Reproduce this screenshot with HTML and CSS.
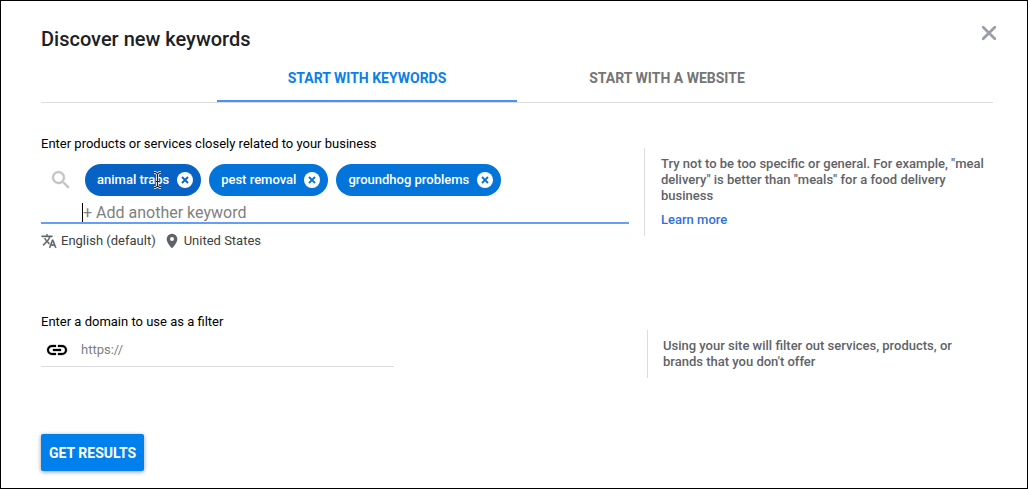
FILE: index.html
```html
<!DOCTYPE html>
<html lang="en">
<head>
<meta charset="utf-8">
<meta name="viewport" content="width=device-width, initial-scale=1">
<title>Discover new keywords</title>
<link rel="stylesheet" href="styles.css">
</head>
<body>
<main class="dialog">
  <header class="header">
    <h1 class="title">Discover new keywords</h1>
    <button class="close" type="button" aria-label="Close">
      <svg width="16" height="16" viewBox="0 0 16 16"><path d="M2.2 2.2l11.6 11.6M13.8 2.2L2.2 13.8" stroke="#9aa0a6" stroke-width="2.8" stroke-linecap="round"/></svg>
    </button>
  </header>

  <div class="tabs" role="tablist">
    <button class="tab tab-active" type="button" role="tab" aria-selected="true">START WITH KEYWORDS</button>
    <button class="tab" type="button" role="tab" aria-selected="false">START WITH A WEBSITE</button>
  </div>

  <form class="form">
    <section class="row">
      <div class="field">
        <label class="label" for="keywords">Enter products or services closely related to your business</label>
        <div class="keyword-box">
          <svg class="search" width="24" height="24" viewBox="0 0 24 24"><path fill="#c4c4c4" stroke="#c4c4c4" stroke-width=".4" d="M15.5 14h-.79l-.28-.27A6.47 6.47 0 0 0 16 9.500 6.500 6.500 0 1 0 9.500 16c1.610 0 3.090-.59 4.230-1.570l.27.28v.79l5 4.990L20.490 19l-4.990-5zm-6 0C7.010 14 5 11.990 5 9.500S7.010 5 9.500 5 14 7.010 14 9.500 11.990 14 9.500 14z"/></svg>
          <div class="chips">
            <span class="chip chip-hover">animal traps
              <button class="remove" type="button" aria-label="Remove animal traps"><svg width="16" height="16" viewBox="0 0 16 16"><circle cx="8" cy="8" r="8" fill="#fff"/><path d="M5 5l6 6M11 5l-6 6" stroke="#0662c4" stroke-width="1.800"/></svg></button>
              <svg class="pointer" width="9" height="18" viewBox="0 0 9 18"><path d="M1 1.500h1.500l2 1.500 2-1.500H8M4.500 3v12M1 16.500h1.500l2-1.500 2 1.500H8M3 10.500h3" fill="none" stroke="#fff" stroke-width="2.600"/><path d="M1 1.500h1.500l2 1.500 2-1.500H8M4.500 3v12M1 16.500h1.500l2-1.500 2 1.500H8M3 10.500h3" fill="none" stroke="#222" stroke-width="1.200"/></svg>
            </span>
            <span class="chip">pest removal
              <button class="remove" type="button" aria-label="Remove pest removal"><svg width="16" height="16" viewBox="0 0 16 16"><circle cx="8" cy="8" r="8" fill="#fff"/><path d="M5 5l6 6M11 5l-6 6" stroke="#0274da" stroke-width="1.800"/></svg></button>
            </span>
            <span class="chip">groundhog problems
              <button class="remove" type="button" aria-label="Remove groundhog problems"><svg width="16" height="16" viewBox="0 0 16 16"><circle cx="8" cy="8" r="8" fill="#fff"/><path d="M5 5l6 6M11 5l-6 6" stroke="#0274da" stroke-width="1.800"/></svg></button>
            </span>
          </div>
          <input class="keyword-input" id="keywords" type="text" placeholder="+ Add another keyword">
        </div>
        <div class="targeting">
          <button class="target" type="button"><svg width="16" height="16" viewBox="0 0 24 24"><path fill="#5f6368" stroke="#5f6368" stroke-width=".5" d="M12.870 15.070l-2.540-2.510.03-.03A17.520 17.520 0 0 0 14.070 6H17V4h-7V2H8v2H1v2h11.170C11.500 7.920 10.440 9.750 9 11.350 8.070 10.320 7.300 9.190 6.690 8h-2c.73 1.630 1.730 3.170 2.980 4.560l-5.090 5.020L4 19l5-5 3.110 3.110.76-2.040zM18.500 10h-2L12 22h2l1.120-3h4.750L21 22h2l-4.500-12zm-2.620 7l1.620-4.330L19.120 17h-3.240z"/></svg>English (default)</button>
          <button class="target" type="button"><svg width="16" height="16" viewBox="0 0 24 24"><path fill="#5f6368" d="M12 1a8 8 0 0 0-8 8c0 6 8 14 8 14s8-8 8-14a8 8 0 0 0-8-8zm0 11a3 3 0 1 1 0-6 3 3 0 0 1 0 6z"/></svg>United States</button>
        </div>
      </div>
      <aside class="tip">
        <p class="tip-text">Try not to be too specific or general. For example, "meal delivery" is better than "meals" for a food delivery business</p>
        <a class="learn" href="#">Learn more</a>
      </aside>
    </section>

    <section class="row">
      <div class="field">
        <label class="label" for="domain">Enter a domain to use as a filter</label>
        <div class="domain-box">
          <svg width="24" height="24" viewBox="0 0 24 24"><path fill="#000" stroke="#000" stroke-width=".3" d="M3.900 12c0-1.710 1.390-3.100 3.100-3.100h4V7H7a5 5 0 0 0 0 10h4v-1.900H7c-1.710 0-3.100-1.390-3.100-3.100zM8 13h8v-2H8v2zm9-6h-4v1.900h4a3.100 3.100 0 0 1 0 6.200h-4V17h4a5 5 0 0 0 0-10z"/></svg>
          <input class="domain-input" id="domain" type="text" placeholder="https://">
        </div>
      </div>
      <aside class="tip tip-short">
        <p class="tip-text">Using your site will filter out services, products, or brands that you don't offer</p>
      </aside>
    </section>

    <button class="submit" type="button">GET RESULTS</button>
  </form>
</main>
</body>
</html>
```
FILE: styles.css
```css
* {
  box-sizing: border-box;
}

body {
  margin: 0;
  background: #fff;
  color: #000;
  font-family: Roboto, "Liberation Sans", sans-serif;
  font-size: 13px;
  line-height: 16px;
}

button,
input {
  margin: 0;
  padding: 0;
  border: 0;
  background: none;
  color: inherit;
  font: inherit;
}

button {
  cursor: pointer;
}

input {
  outline: none;
}

svg {
  display: block;
  flex: none;
}

h1,
p {
  margin: 0;
}

.dialog {
  min-height: 100vh;
  padding: 24px 34px 16px 40px;
  border: 1px solid #000;
}

.header {
  display: flex;
  align-items: flex-start;
  justify-content: space-between;
}

.title {
  padding-top: 2px;
  color: #202124;
  font-size: 20px;
  font-weight: 500;
  line-height: 24px;
}

.close {
  margin-right: -4px;
}

.tabs {
  display: flex;
  justify-content: center;
  margin-top: 4px;
  border-bottom: 1px solid #dadce0;
}

.tab {
  width: 300px;
  height: 47px;
  border-bottom: 2px solid transparent;
  color: #757575;
  font-size: 14px;
  font-weight: 700;
}

.tab-active {
  border-color: #4a90f5;
  color: #0a80ea;
}

.form {
  display: flex;
  flex-direction: column;
  align-items: flex-start;
}

.row {
  display: grid;
  grid-template-columns: 588fr 349fr;
  column-gap: 15px;
  align-items: start;
  width: 100%;
  margin-top: 33px;
}

.row + .row {
  margin-top: 65px;
}

.label {
  display: block;
}

.keyword-box {
  display: grid;
  grid-template-columns: 24px 1fr;
  column-gap: 12px;
  margin-top: 12px;
  padding-left: 8px;
  border-bottom: 2px solid #669df6;
}

.search {
  align-self: center;
}

.chips {
  display: flex;
  flex-wrap: wrap;
  gap: 8px;
}

.chip {
  position: relative;
  display: flex;
  align-items: center;
  gap: 8px;
  height: 32px;
  padding: 0 8px 0 12px;
  border-radius: 16px;
  background: #0274da;
  color: #fff;
  font-weight: 500;
}

.chip-hover {
  background: #0662c4;
}

.pointer {
  position: absolute;
  top: 7px;
  left: 68px;
}

.keyword-input {
  grid-column: 2;
  height: 19px;
  margin: 7px 0 0 -3px;
  border-left: 1px solid #000;
  font-size: 16px;
}

.keyword-input::placeholder,
.domain-input::placeholder {
  color: #808080;
  opacity: 1;
}

.targeting {
  display: flex;
  gap: 8px;
  margin-top: 9px;
}

.target {
  display: flex;
  align-items: center;
  gap: 4px;
  color: #3c4043;
}

.tip {
  margin-top: 12px;
  padding: 8px 0 8px 16px;
  border-left: 1px solid #dadce0;
  color: #5f6368;
  font-weight: 500;
}

.tip-short {
  margin-top: 16px;
  margin-left: 3px;
  padding-right: 16px;
  padding-left: 15px;
}

.learn {
  display: block;
  margin-top: 8px;
  color: #3270d8;
  text-decoration: none;
}

.domain-box {
  display: flex;
  align-items: center;
  gap: 12px;
  width: 60%;
  height: 37px;
  padding: 4px 0 0 4px;
  border-bottom: 1px solid #dadce0;
}

.domain-input {
  flex: 1;
  min-width: 0;
}

.submit {
  height: 37px;
  margin-top: 56px;
  padding: 0 8px;
  border-radius: 2px;
  background: #0080ec;
  box-shadow: 0 1px 4px rgba(0, 0, 0, 0.4);
  color: #fff;
  font-size: 14px;
  font-weight: 700;
}
```
